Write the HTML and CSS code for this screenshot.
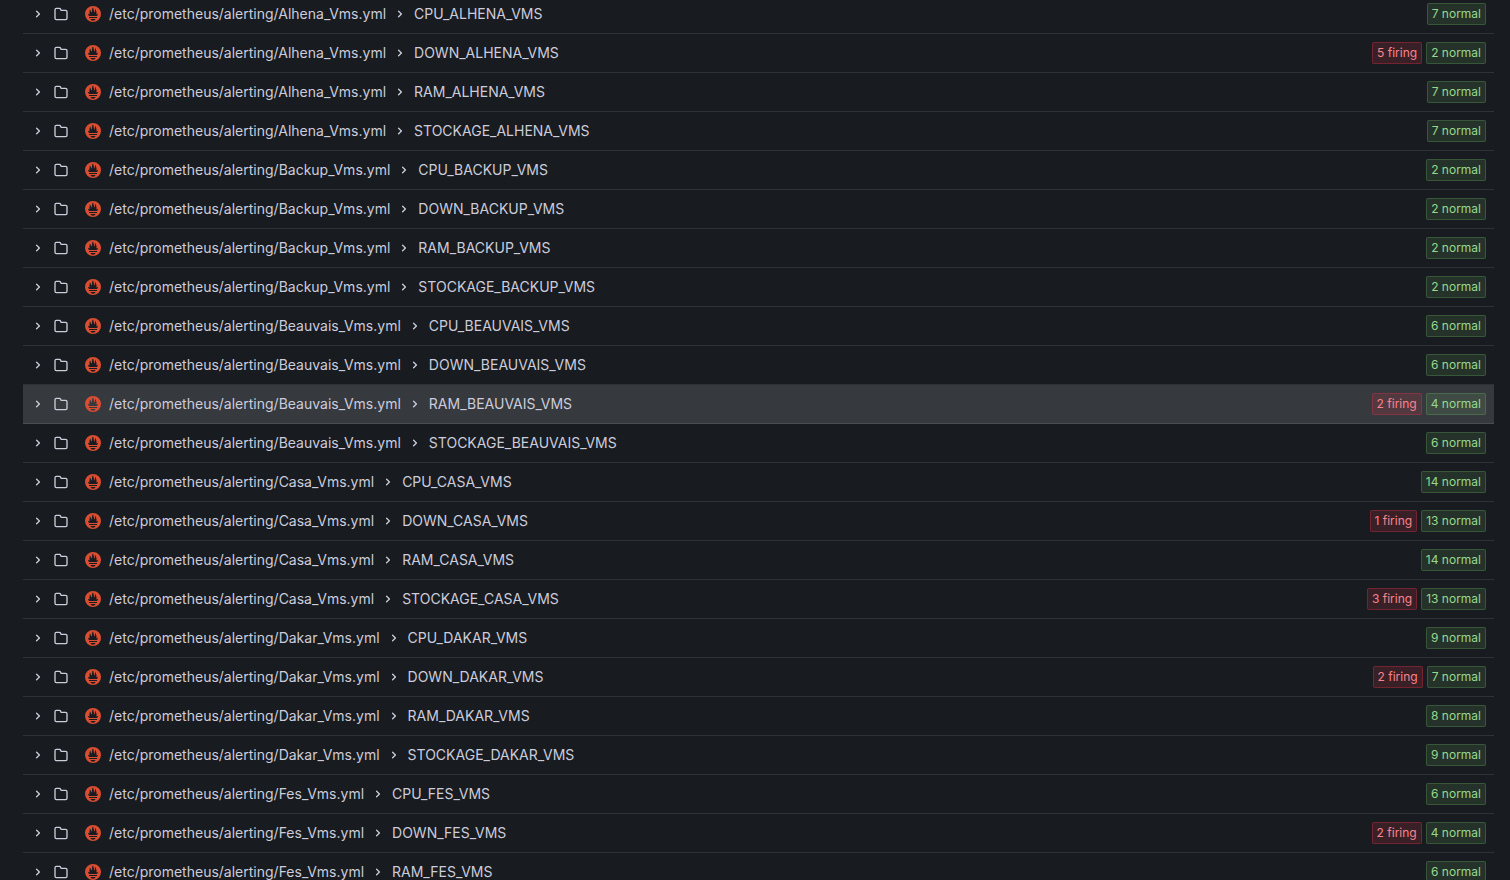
FILE: index.html
```html
<!DOCTYPE html>
<html lang="en">

<head>
    <meta charset="UTF-8">
    <meta name="viewport" content="width=device-width, initial-scale=1.0">
    <title>Alert rules</title>
    <link rel="stylesheet" href="styles.css">
</head>

<body>
    <main class="rule-list" id="rule-list"></main>

    <!-- icons shared by every row -->
    <svg class="sprite" aria-hidden="true">
        <symbol id="icon-angle" viewBox="0 0 24 24">
            <path d="M14.83,11.29,10.59,7.05a1,1,0,0,0-1.42,0,1,1,0,0,0,0,1.41L12.71,12,9.17,15.54a1,1,0,0,0,0,1.41,1,1,0,0,0,.71.29,1,1,0,0,0,.71-.29l4.24-4.24A1,1,0,0,0,14.83,11.29Z"/>
        </symbol>
        <symbol id="icon-folder" viewBox="0 0 24 24">
            <path d="M19,5.5H12.72l-.32-1a3,3,0,0,0-2.84-2H5a3,3,0,0,0-3,3v13a3,3,0,0,0,3,3H19a3,3,0,0,0,3-3V8.5A3,3,0,0,0,19,5.5Zm1,13a1,1,0,0,1-1,1H5a1,1,0,0,1-1-1V5.5a1,1,0,0,1,1-1H9.56a1,1,0,0,1,.95.68l.54,1.64A1,1,0,0,0,12,7.5h7a1,1,0,0,1,1,1Z"/>
        </symbol>
        <symbol id="icon-prometheus" viewBox="0 0 16 16">
            <path fill-rule="evenodd" d="M8 0a8 8 0 1 0 0 16A8 8 0 0 0 8 0zM3 7.8L4.7 8.4C4.2 7.4 4.3 6.4 4.6 5.4C4.8 4.6 4.9 4 4.8 3.2C5.7 3.9 6 5.2 6.2 6.6L6.7 6.2C7.1 4.9 7 3.6 7.2 2.7C7.3 2.1 7.7 1.7 8.3 1.5C8.2 2.4 8.7 3.6 8.9 5.2L9.2 6.6L9.7 6.2C9.8 4.9 9.9 3.7 10.6 2.8C10.5 3.7 11 4.5 11.3 5.4C11.6 6.4 11.7 7.4 11.2 8.4L13 7.8C12.9 8.7 12.5 9.4 12 10H4C3.5 9.4 3.1 8.7 3 7.8zM4 11H12V12H4zM5.5 13H10.5C10.2 14.1 9.2 14.7 8 14.7S5.8 14.1 5.5 13z"/>
        </symbol>
    </svg>

    <script src="script.js"></script>
</body>

</html>
```
FILE: styles.css
```css
body {
    margin: 0;
    height: 100vh;
    overflow: hidden;
    background-color: #181b1f;
    color: #ccccdc;
    font-family: Inter, sans-serif;
    font-size: 14px;
    line-height: 22px;
}

.sprite {
    display: none;
}

.rule-list {
    padding: 0 16px 0 23px;
}

.rule-group {
    display: flex;
    align-items: center;
    padding: 8px 8px 8px 7px;
    border-bottom: 1px solid #2e3136;
}

/* the list is scrolled a little past its first row */
.rule-group:first-child {
    padding-top: 3px;
}

.rule-group.active {
    background-color: #36393e;
    border-bottom-color: #4a4d52;
}

.icon {
    display: block;
    width: 16px;
    height: 16px;
    flex-shrink: 0;
    fill: currentColor;
}

.toggle {
    padding: 0;
    border: none;
    background: none;
    color: inherit;
    cursor: pointer;
}

.folder {
    margin-left: 7px;
}

.prometheus {
    margin: 0 8px 0 16px;
    color: #da4e31;
}

.heading {
    display: flex;
    align-items: center;
    gap: 6px;
    margin: 0;
    font-size: 14px;
    font-weight: 400;
}

.stats {
    display: flex;
    gap: 4px;
    margin-left: auto;
}

.badge {
    padding: 1px 4px;
    border: 1px solid;
    border-radius: 2px;
    font-size: 12px;
    line-height: 18px;
}

.firing {
    color: #f9838e;
    background-color: rgba(224, 60, 75, 0.17);
    border-color: rgba(224, 47, 68, 0.35);
}

.normal {
    color: #96d98d;
    background-color: rgba(115, 191, 105, 0.15);
    border-color: rgba(115, 191, 105, 0.25);
}
```
FILE: script.js
```javascript
// file, group, firing, normal
const groups = [
    ['Alhena', 'CPU_ALHENA_VMS', 0, 7],
    ['Alhena', 'DOWN_ALHENA_VMS', 5, 2],
    ['Alhena', 'RAM_ALHENA_VMS', 0, 7],
    ['Alhena', 'STOCKAGE_ALHENA_VMS', 0, 7],
    ['Backup', 'CPU_BACKUP_VMS', 0, 2],
    ['Backup', 'DOWN_BACKUP_VMS', 0, 2],
    ['Backup', 'RAM_BACKUP_VMS', 0, 2],
    ['Backup', 'STOCKAGE_BACKUP_VMS', 0, 2],
    ['Beauvais', 'CPU_BEAUVAIS_VMS', 0, 6],
    ['Beauvais', 'DOWN_BEAUVAIS_VMS', 0, 6],
    ['Beauvais', 'RAM_BEAUVAIS_VMS', 2, 4],
    ['Beauvais', 'STOCKAGE_BEAUVAIS_VMS', 0, 6],
    ['Casa', 'CPU_CASA_VMS', 0, 14],
    ['Casa', 'DOWN_CASA_VMS', 1, 13],
    ['Casa', 'RAM_CASA_VMS', 0, 14],
    ['Casa', 'STOCKAGE_CASA_VMS', 3, 13],
    ['Dakar', 'CPU_DAKAR_VMS', 0, 9],
    ['Dakar', 'DOWN_DAKAR_VMS', 2, 7],
    ['Dakar', 'RAM_DAKAR_VMS', 0, 8],
    ['Dakar', 'STOCKAGE_DAKAR_VMS', 0, 9],
    ['Fes', 'CPU_FES_VMS', 0, 6],
    ['Fes', 'DOWN_FES_VMS', 2, 4],
    ['Fes', 'RAM_FES_VMS', 0, 6]
];

const activeGroup = 'RAM_BEAUVAIS_VMS';

function icon(name, className = '') {
    return `<svg class="icon ${className}" aria-hidden="true"><use href="#icon-${name}"></use></svg>`;
}

document.getElementById('rule-list').innerHTML = groups.map(([file, group, firing, normal]) => `
    <section class="rule-group ${group === activeGroup ? 'active' : ''}">
        <button class="toggle" type="button" aria-expanded="false" aria-label="Expand ${group}">${icon('angle')}</button>
        ${icon('folder', 'folder')}
        ${icon('prometheus', 'prometheus')}
        <h6 class="heading">
            <span>/etc/prometheus/alerting/${file}_Vms.yml</span>
            ${icon('angle')}
            <span>${group}</span>
        </h6>
        <div class="stats">
            ${firing ? `<span class="badge firing">${firing} firing</span>` : ''}
            <span class="badge normal">${normal} normal</span>
        </div>
    </section>`).join('');
```
